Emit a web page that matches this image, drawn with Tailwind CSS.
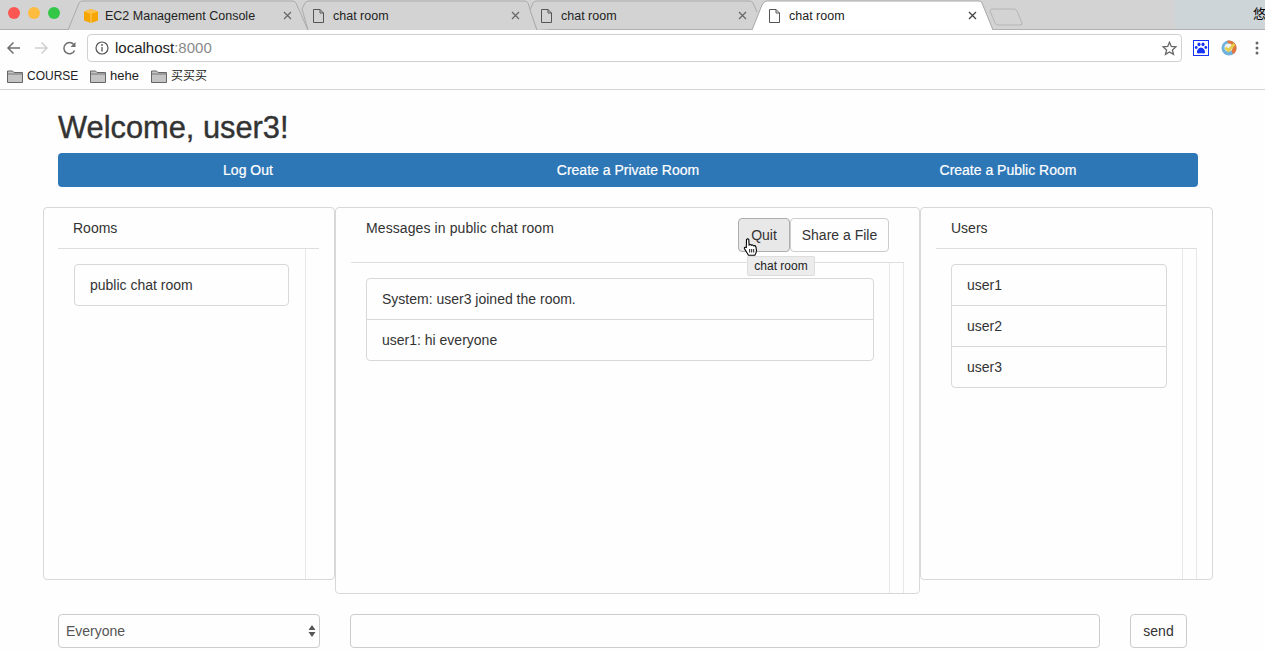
<!DOCTYPE html>
<html lang="en">
<head>
  <meta charset="UTF-8" />
  <title>chat room</title>
  <script src="https://cdn.jsdelivr.net/npm/@tailwindcss/browser@4"></script>
</head>
<body class="bg-[#fefefe] h-[653px] w-[1265px] overflow-hidden font-['Liberation_Sans','Noto_Sans_CJK_SC',sans-serif] text-[14px] text-[#333]">

  <!-- Tab strip -->
  <div class="relative h-[30px] bg-[#d3d3d3] overflow-hidden">
    <div class="absolute right-0 top-0 h-full w-[90px] bg-[#ced5d8]"></div>
    <svg class="absolute left-0 top-0" width="1265" height="30" fill="none">
      <path d="M0 29.5 H1265" stroke="#b0b0b0"/>
      <path d="M68 30 L79 3 Q80 1 83 1 L292 1 Q295 1 296 3 L308 30" fill="#d3d3d3" stroke="#ababab"/>
      <path d="M308 30 L302 9 L305 3 Q306 1 309 1 L524 1 Q527 1 528 3 L537 30" fill="#d3d3d3" stroke="#ababab"/>
      <path d="M537 30 L530 10 L533 3 Q534 1 537 1 L749 1 Q752 1 753 3 L757 12" fill="#d3d3d3" stroke="#ababab"/>
      <path d="M752 30 L762 5 Q764 1 767 1 L979 1 Q981 1 982 3 L993 30" fill="#fff" stroke="#a8a8a8"/>
      <path d="M990 11 Q990 9 992 9 L1014 9 Q1016 9 1017 11 L1022 23 Q1023 25 1020 25 L998 25 Q996 25 995 23 Z" stroke="#b5b5b5"/>
    </svg>
    <div class="absolute left-[8px] top-[7px] flex gap-[8px]">
      <span class="w-[12px] h-[12px] rounded-full bg-[#fc5753]"></span>
      <span class="w-[12px] h-[12px] rounded-full bg-[#fdbc40]"></span>
      <span class="w-[12px] h-[12px] rounded-full bg-[#33c748]"></span>
    </div>
    <div class="relative flex h-full pt-[1px] pl-[83px] text-[12.5px] text-[#222] leading-[30px]">
      <div class="w-[217px] flex items-center">
        <svg width="16" height="16" viewBox="0 0 16 16"><path d="M8 1 L15 3.5 V12.5 L8 15 L1 12.5 V3.5 Z" fill="#f7a600"/><path d="M1 3.5 L8 1 L15 3.5 L8 6 Z" fill="#fbc04a"/><path d="M8 6 V15" stroke="#ffd98a" stroke-width=".8" fill="none"/></svg>
        <span class="ml-[6px] grow">EC2 Management Console</span>
        <svg class="mr-[8px]" width="9" height="9" viewBox="0 0 9 9"><path d="M1 1 L8 8 M8 1 L1 8" stroke="#666" stroke-width="1.2"/></svg>
      </div>
      <div class="w-[228px] flex items-center pl-[13px]">
        <svg width="11" height="14" viewBox="0 0 11 14" fill="none"><path d="M1 .5 H7 L10.5 4 V13.5 H.5 V.5 Z M7 .5 V4 H10.5" stroke="#555"/></svg>
        <span class="ml-[9px] grow">chat room</span>
        <svg class="mr-[8px]" width="9" height="9" viewBox="0 0 9 9"><path d="M1 1 L8 8 M8 1 L1 8" stroke="#666" stroke-width="1.2"/></svg>
      </div>
      <div class="w-[228px] flex items-center pl-[13px]">
        <svg width="11" height="14" viewBox="0 0 11 14" fill="none"><path d="M1 .5 H7 L10.5 4 V13.5 H.5 V.5 Z M7 .5 V4 H10.5" stroke="#555"/></svg>
        <span class="ml-[9px] grow">chat room</span>
        <svg class="mr-[9px]" width="9" height="9" viewBox="0 0 9 9"><path d="M1 1 L8 8 M8 1 L1 8" stroke="#666" stroke-width="1.2"/></svg>
      </div>
      <div class="w-[228px] flex items-center pl-[13px]">
        <svg width="11" height="14" viewBox="0 0 11 14" fill="none"><path d="M1 .5 H7 L10.5 4 V13.5 H.5 V.5 Z M7 .5 V4 H10.5" stroke="#555"/></svg>
        <span class="ml-[9px] grow">chat room</span>
        <svg class="mr-[7px]" width="9" height="9" viewBox="0 0 9 9"><path d="M1 1 L8 8 M8 1 L1 8" stroke="#444" stroke-width="1.3"/></svg>
      </div>
    </div>
    <span class="absolute left-[1253px] top-[6px] text-[13px] leading-[16px] text-black">悠</span>
  </div>

  <!-- Address bar -->
  <div class="flex items-center h-[36px] bg-[#fefefe] pl-[6px]">
    <svg width="15" height="14" viewBox="0 0 15 14" fill="none"><path d="M14 7 H2 M7.5 1.5 L2 7 L7.5 12.5" stroke="#6e6e6e" stroke-width="1.5"/></svg>
    <svg class="ml-[13px]" width="15" height="14" viewBox="0 0 15 14" fill="none"><path d="M1 7 H13 M7.5 1.5 L13 7 L7.5 12.5" stroke="#cfcfcf" stroke-width="1.5"/></svg>
    <svg class="ml-[13px]" width="15" height="15" viewBox="0 0 15 15" fill="none"><path d="M12.6 9.5 A5.6 5.6 0 1 1 11.8 3.6" stroke="#6e6e6e" stroke-width="1.5"/><path d="M13.5 1 V6 H8.5 Z" fill="#6e6e6e"/></svg>
    <div class="ml-[10px] w-[1095px] h-[28px] border border-[#d0d0d0] rounded-[4px] bg-white flex items-center pl-[7px] pr-[4px] text-[15px]">
      <svg width="14" height="14" viewBox="0 0 14 14" fill="none"><circle cx="7" cy="7" r="6" stroke="#555" stroke-width="1.2"/><path d="M7 6 V10.5" stroke="#555" stroke-width="1.3"/><circle cx="7" cy="4" r=".9" fill="#555"/></svg>
      <span class="ml-[6px] grow text-[#222]">localhost<span class="text-[#8a8a8a]">:8000</span></span>
      <svg width="15" height="15" viewBox="0 0 15 15" fill="none"><path d="M7.5 1.3 L9.3 5.5 L13.9 5.9 L10.4 8.9 L11.5 13.4 L7.5 11 L3.5 13.4 L4.6 8.9 L1.1 5.9 L5.7 5.5 Z" stroke="#666" stroke-width="1.3"/></svg>
    </div>
    <svg class="ml-[11px]" width="16" height="16" viewBox="0 0 16 16"><rect x=".5" y=".5" width="15" height="15" fill="#fff" stroke="#1733f5"/><path d="M8 7.5 C10 7.5 12.5 10.5 12 12.5 C11.5 14 9.5 13.3 8 13.3 C6.5 13.3 4.5 14 4 12.5 C3.5 10.5 6 7.5 8 7.5 Z" fill="#1733f5"/><ellipse cx="6" cy="4.3" rx="1.5" ry="1.9" fill="#1733f5"/><ellipse cx="10" cy="4.3" rx="1.5" ry="1.9" fill="#1733f5"/><circle cx="3.2" cy="7.5" r="1.4" fill="#1733f5"/><circle cx="12.8" cy="7.5" r="1.4" fill="#1733f5"/></svg>
    <svg class="ml-[12px]" width="16" height="16" viewBox="0 0 16 16" fill="none"><circle cx="8" cy="8" r="7.5" fill="#6fb2dc"/><path d="M6 .8 A7.5 7.5 0 0 1 15.5 8 A7.5 7.5 0 0 1 12 14.3 Z" fill="#e2763c"/><circle cx="7.5" cy="7.5" r="4" fill="#eef3f5"/><path d="M4.5 7.5 L7.5 10.5 L13.5 4" stroke="#e3cf4a" stroke-width="2.6"/></svg>
    <svg class="ml-[18px]" width="4" height="14" viewBox="0 0 4 14"><circle cx="2" cy="2" r="1.5" fill="#666"/><circle cx="2" cy="7" r="1.5" fill="#666"/><circle cx="2" cy="12" r="1.5" fill="#666"/></svg>
  </div>

  <!-- Bookmarks -->
  <div class="flex items-center h-[24px] pb-[3px] pl-[7px] text-[12px] text-[#222] border-b border-[#d5d5d5]">
    <svg width="16" height="13" viewBox="0 0 16 13"><path d="M.5 12.5 V1 H5.5 L7 2.5 H15.5 V12.5 Z" fill="#c4c4c4" stroke="#666"/><path d="M1 4 H15" stroke="#777"/></svg>
    <span class="ml-[4px] w-[50px] whitespace-nowrap">COURSE</span>
    <svg class="ml-[13px]" width="16" height="13" viewBox="0 0 16 13"><path d="M.5 12.5 V1 H5.5 L7 2.5 H15.5 V12.5 Z" fill="#c4c4c4" stroke="#666"/><path d="M1 4 H15" stroke="#777"/></svg>
    <span class="ml-[4px] text-[13px]">hehe</span>
    <svg class="ml-[12px]" width="16" height="13" viewBox="0 0 16 13"><path d="M.5 12.5 V1 H5.5 L7 2.5 H15.5 V12.5 Z" fill="#c4c4c4" stroke="#666"/><path d="M1 4 H15" stroke="#777"/></svg>
    <span class="ml-[4px]">买买买</span>
  </div>

  <!-- Page -->
  <main class="relative pt-[20px]">
    <h1 class="ml-[58px] text-[30.8px] leading-[36px] font-normal [-webkit-text-stroke:0.4px_#333]">Welcome, user3!</h1>

    <div class="ml-[58px] mt-[7px] w-[1140px] h-[34px] bg-[#2e77b7] rounded-[4px] grid grid-cols-3 text-white text-center leading-[34px] [-webkit-text-stroke:0.2px_#fff]">
      <span>Log Out</span>
      <span>Create a Private Room</span>
      <span>Create a Public Room</span>
    </div>

    <div class="flex items-start ml-[43px] mt-[20px]">
      <!-- Rooms -->
      <section class="w-[292px] h-[373px] border border-[#d8d8d8] rounded-[4px] pl-[14px] pr-[15px] flex flex-col">
        <h2 class="h-[41px] border-b border-[#dedede] pl-[15px] leading-[40px]">Rooms</h2>
        <div class="flex-1 w-[248px] border-r border-[#e8e8e8] pl-[16px] pt-[15px]">
          <div class="w-[215px] border border-[#d8d8d8] rounded-[4px] pl-[15px] h-[42px] leading-[40px]">public chat room</div>
        </div>
      </section>

      <!-- Messages -->
      <section class="w-[585px] h-[387px] border border-[#d8d8d8] rounded-[4px] px-[15px] flex flex-col">
        <div class="h-[55px] border-b border-[#dedede] flex justify-between pl-[15px] pr-[15px]">
          <h2 class="leading-[40px] tracking-[0.1px]">Messages in public chat room</h2>
          <div class="flex mt-[10px] h-[34px]">
            <span class="w-[52px] h-[34px] border border-[#adadad] bg-[#e8e8e8] rounded-[4px] text-center leading-[32px]">Quit</span>
            <span class="w-[99px] h-[34px] border border-[#ccc] rounded-[4px] text-center leading-[32px]">Share a File</span>
          </div>
        </div>
        <div class="flex-1 border-r border-[#e8e8e8]">
          <div class="h-full w-[539px] border-r border-[#e8e8e8] pl-[15px] pt-[15px]">
            <div class="w-[508px] border border-[#d8d8d8] rounded-[4px]">
              <div class="h-[41px] pl-[15px] leading-[40px] border-b border-[#d8d8d8]">System: user3 joined the room.</div>
              <div class="h-[40px] pl-[15px] leading-[40px]">user1: hi everyone</div>
            </div>
          </div>
        </div>
      </section>

      <!-- Users -->
      <section class="w-[293px] h-[373px] border border-[#d8d8d8] rounded-[4px] px-[15px] flex flex-col">
        <h2 class="h-[41px] border-b border-[#dedede] pl-[15px] leading-[40px]">Users</h2>
        <div class="flex-1 border-r border-[#e8e8e8]">
          <div class="h-full w-[247px] border-r border-[#e8e8e8] pl-[15px] pt-[15px]">
            <div class="w-[216px] border border-[#d8d8d8] rounded-[4px]">
              <div class="h-[41px] pl-[15px] leading-[40px] border-b border-[#d8d8d8]">user1</div>
              <div class="h-[41px] pl-[15px] leading-[40px] border-b border-[#d8d8d8]">user2</div>
              <div class="h-[40px] pl-[15px] leading-[40px]">user3</div>
            </div>
          </div>
        </div>
      </section>
    </div>

    <!-- Send row -->
    <div class="flex ml-[58px] mt-[20px] text-[#555]">
      <div class="relative w-[262px] h-[34px] border border-[#ccc] rounded-[4px] pl-[7px] leading-[32px]">
        Everyone
        <svg class="absolute right-[3px] top-[10px]" width="8" height="12" viewBox="0 0 8 12"><path d="M4 0 L7.5 5 H.5 Z M4 12 L7.5 7 H.5 Z" fill="#555"/></svg>
      </div>
      <div class="ml-[30px] w-[750px] h-[34px] border border-[#ccc] rounded-[4px]"></div>
      <div class="ml-[30px] w-[57px] h-[34px] border border-[#ccc] rounded-[4px] text-center leading-[32px] text-[#333]">send</div>
    </div>

    <!-- Tooltip and cursor -->
    <div class="absolute left-[747px] top-[166px] h-[20px] w-[68px] text-center bg-[#ececec] border border-[#ddd] rounded-[2px] text-[12px] leading-[18px] text-[#222]">chat room</div>
    <svg class="absolute left-[743px] top-[148px]" width="15" height="18" viewBox="0 0 14 18"><path d="M3 1.5 Q4.2 .2 5.3 1.5 L5.6 7 Q7 6 7.8 7.2 Q9.2 6.4 10 7.8 Q11.6 7.2 12.4 8.8 L13 12.5 Q12.8 15 11.3 17.3 H5 L1 10.8 Q.3 8.8 2.8 9.5 Z" fill="#fff" stroke="#000" stroke-width="1.1"/><path d="M6.2 11 V14.5 M8.2 11 V14.5 M10.2 11 V14.5" stroke="#000" stroke-width=".9"/></svg>
  </main>
</body>
</html>
